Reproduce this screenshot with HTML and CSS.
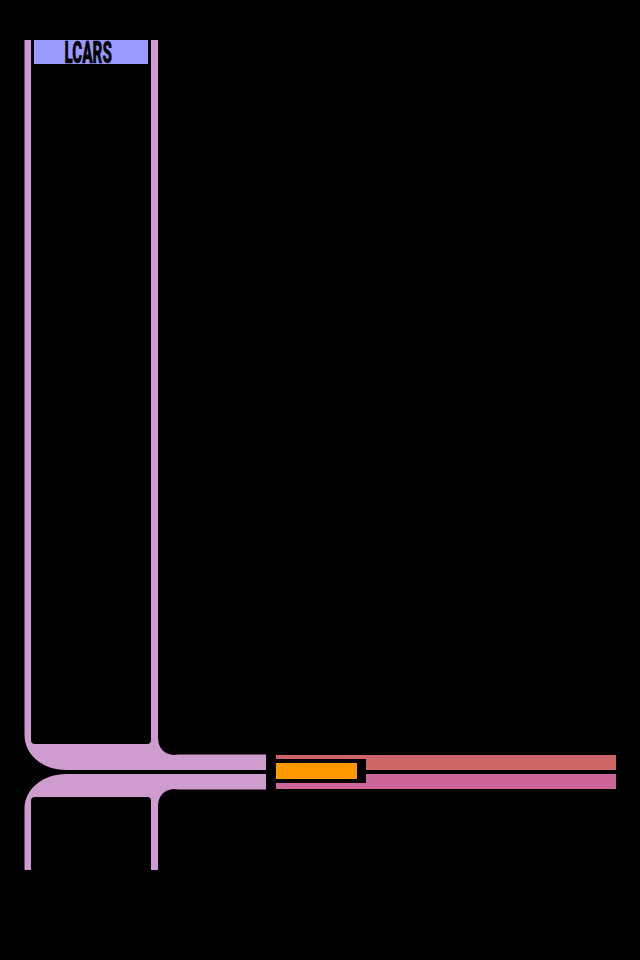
FILE: index.html
```
<!DOCTYPE html>
<html lang="en">
<head>
  <meta charset="UTF-8">
  <meta name="viewport" content="width=device-width, initial-scale=1.0">
  <title>LCARS</title>
  <link rel="stylesheet" href="styles.css">
</head>
<body>
  <div class="screen">
    <!-- Upper frame -->
    <div class="panel panel-top">
      <div class="rail rail-left"></div>
      <div class="title">
        <svg class="title-text" viewBox="0 0 114 24">
          <text x="30.5" y="23" textLength="47.5" lengthAdjust="spacingAndGlyphs">LCARS</text>
        </svg>
      </div>
      <div class="rail"></div>
    </div>

    <div class="row">
      <svg class="elbow" viewBox="0 0 242 40">
        <path d="M.5 0H7V10Q7 14 11 14H123Q127 14 127 10V0H134V7C134 18 140 24.6 150 25L154 24.6H242V40H42C20 40 .5 26 .5 5Z"/>
      </svg>
      <div class="bar bar-red"></div>
      <div class="indicator"></div>
    </div>

    <div class="row row-bottom">
      <svg class="elbow" viewBox="0 0 242 40">
        <path d="M.5 40H7V27Q7 23 11 23H123Q127 23 127 27V40H134V33C134 22 140 15.4 150 15L154 15.4H242V0H42C20 0 .5 14 .5 35Z"/>
      </svg>
      <div class="bar bar-pink"></div>
    </div>

    <!-- Lower frame -->
    <div class="panel panel-bottom">
      <div class="rail rail-left"></div>
      <div class="rail"></div>
    </div>
  </div>
</body>
</html>
```
FILE: styles.css
```
body {
  margin: 0;
  height: 100vh;
  overflow: hidden;
  background-color: #000;
  font-family: Roboto, "Liberation Sans", sans-serif;
}
.screen {
  padding: 40px 24px 0;
}
.panel {
  display: flex;
  justify-content: space-between;
  width: 134px;
}
.panel-top {
  height: 690px;
}
.panel-bottom {
  height: 56px;
}
.rail {
  width: 7px;
  background-color: #cf9ccf;
}
.rail-left {
  background: linear-gradient(to right, #684e68 1px, #cf9ccf 1px);
}
.title {
  width: 114px;
  height: 24px;
  margin: 0 3px;
  background-color: #99f;
}
.title-text {
  display: block;
  width: 114px;
  height: 24px;
  overflow: visible;
}
.title-text text {
  fill: #000;
  stroke: #000;
  stroke-width: 0.4px;
  font-size: 30.5px;
  font-weight: 900;
}
.row {
  position: relative;
  display: flex;
  align-items: flex-end;
  gap: 10px;
  height: 40px;
}
.row-bottom {
  align-items: flex-start;
  margin-top: 4px;
}
.elbow {
  flex: none;
  width: 242px;
  height: 40px;
  fill: #cf9ccf;
}
.bar {
  width: 340px;
  height: 15px;
}
.bar-red {
  background-color: #c66;
}
.bar-pink {
  background-color: #c69;
}
/* Orange block sits over both bars with a black surround */
.indicator {
  position: absolute;
  z-index: 1;
  top: 29px;
  left: 252px;
  width: 81px;
  height: 16px;
  background-color: #f90;
  border: solid #000;
  border-width: 4px 9px 4px 0;
}
```
